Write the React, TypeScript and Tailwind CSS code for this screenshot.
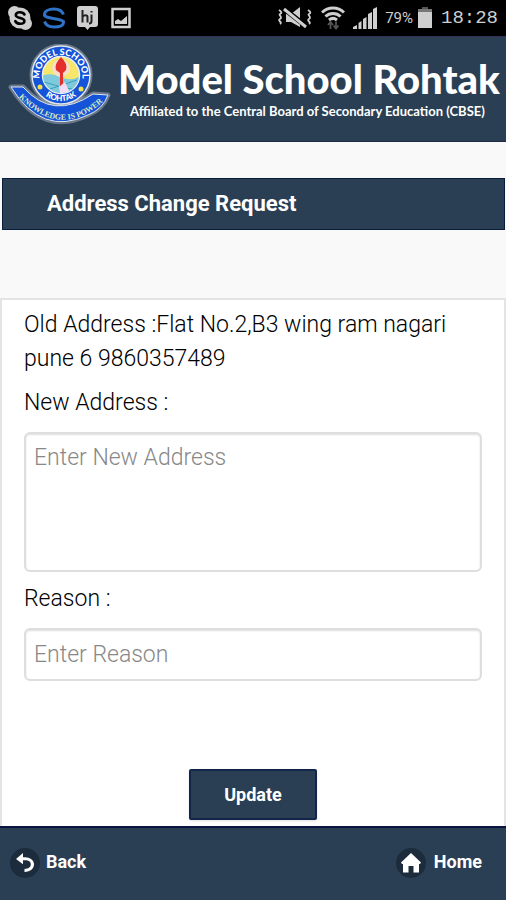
import { ChangeEvent, useState } from "react"

function StatusBar(){
    return(
        <div className="flex h-9 items-center justify-between bg-black pl-2 pr-2 text-[#cfcfcf]">
            <div className="flex items-center gap-2.5">
                <svg className="h-6 w-6" viewBox="0 0 24 24">
                    <circle cx="12" cy="12" r="10.500" fill="currentColor"/>
                    <circle cx="6.500" cy="6.500" r="6.500" fill="currentColor"/>
                    <circle cx="17.500" cy="17.500" r="6.500" fill="currentColor"/>
                    <path d="M16.500 8.500C15.600 7 14 6.300 12 6.300c-2.800 0-4.200 1.100-4.200 2.700 0 4 8.600 1.900 8.600 5.900 0 1.700-1.700 2.800-4.300 2.800-2.300 0-4-.8-4.800-2.600" fill="none" stroke="#000" strokeWidth="2.600" strokeLinecap="round"/>
                </svg>
                <svg className="h-6 w-6" viewBox="0 0 24 24" fill="none" stroke="#2f73c8" strokeWidth="3">
                    <path d="M21.500 8.500C20 4.500 16.500 3 12 3 6.500 3 2.500 5 2.500 8.500c0 2 1.500 2.500 5 3.200l9 1.800c3.500.7 5 1.500 5 3 0 3-4 4.500-9.500 4.500-4.500 0-8-1.500-9.500-5.500"/>
                    <path d="M1 9.500 23 15.500" strokeWidth="1.500"/>
                </svg>
                <svg className="h-6 w-6" viewBox="0 0 24 24">
                    <path d="M4 0h15a3 3 0 0 1 3 3v15a3 3 0 0 1-3 3h-5l-2.500 3L9 21H4a3 3 0 0 1-3-3V3a3 3 0 0 1 3-3z" fill="currentColor"/>
                    <path d="M6.500 4v12.500M6.500 11c1-2.500 5-2.500 5 0v5.500M15.500 8.500V15c0 2-1 2.500-2.500 2.500M15.500 5v1.500" fill="none" stroke="#222" strokeWidth="2"/>
                </svg>
                <svg className="h-6 w-6" viewBox="0 0 24 24">
                    <path d="M2.500 3h17v18h-17z" fill="none" stroke="currentColor" strokeWidth="2.500"/>
                    <path d="M5 18v-3l3-2 3 2 6-5v8z" fill="currentColor"/>
                </svg>
            </div>
            <div className="flex items-center gap-2">
                <svg className="h-6 w-9" viewBox="0 0 36 24">
                    <path d="M9 8h5l9-7v20l-9-5H9z" fill="currentColor"/>
                    <path d="M6 2l24 19" stroke="#000" strokeWidth="5"/>
                    <path d="M7 3l22 18" stroke="currentColor" strokeWidth="3"/>
                    <path d="M2 4c3 2 3 3 1 4s3 3 0 5 3 3 0 5M31 4c3 2 3 3 1 4s3 3 0 5 3 3 0 5" fill="none" stroke="currentColor" strokeWidth="1.800"/>
                </svg>
                <svg className="h-6 w-6" viewBox="0 0 24 24" fill="none" stroke="currentColor" strokeWidth="3">
                    <path d="M1 6.500C7 .5 17 .5 23 6.500M4.500 10.500c4-4 11-4 15 0M8 14c2.500-2 5.500-2 8 0"/>
                    <path d="M9.500 23v-7M7 19l2.500-3 2.500 3M15 15.500v7M12.500 19.500l2.500 3 2.500-3" stroke="#555" strokeWidth="1.800"/>
                </svg>
                <svg className="h-6 w-6" viewBox="0 0 24 24" fill="currentColor">
                    <path d="M0 23v-2l4-2v4zM5.500 17l3-2v8h-3zM10 13l3.500-2v12H10zM15 8l4-2v17h-4zM20 3l4-2v22h-4z"/>
                </svg>
                <div className="flex items-center gap-1">
                    <span className="font-['Roboto',sans-serif] text-[15px]">79%</span>
                    <svg className="h-6 w-4" viewBox="0 0 16 24">
                        <path d="M5 1h6v3H5z" fill="#555"/>
                        <path d="M1 3h14v4H1z" fill="#777"/>
                        <path d="M1 6h14v16H1z" fill="currentColor"/>
                    </svg>
                </div>
                <span className="font-['Liberation_Mono',monospace] text-[19px]">18:28</span>
            </div>
        </div>
    )
}

function SchoolLogo(){
    return(
        <svg className="h-[90px] w-[106px] shrink-0" viewBox="0 0 106 90">
            <defs>
                <path id="ringTop" d="M32.500 39a21.500 21.500 0 1 1 41 0"/>
                <path id="ringBottom" d="M27 31a26 26 0 0 0 52 0"/>
                <path id="ribbon" d="M9 51Q52 98 97 56"/>
                <clipPath id="emblem"><circle cx="53" cy="31" r="18"/></clipPath>
            </defs>
            <g fill="none" stroke="#a9b4c0" strokeOpacity="0.500" strokeWidth="5" strokeLinejoin="round">
                <circle cx="53" cy="31" r="29"/>
                <path d="M3 43h12q30 34 70 7l15 1q-5 14-20 20-46 22-77-28z"/>
            </g>
            <circle cx="53" cy="31" r="29" fill="#1553d8" stroke="#dfe6ee" strokeWidth="1.500"/>
            <circle cx="53" cy="31" r="18.500" fill="#f7e66a" stroke="#e8f0f8" strokeWidth="1.500"/>
            <g clipPath="url(#emblem)">
                <path d="M34 32q9-4 19 1t19-1v20H34z" fill="#7fc9dd"/>
                <path d="M36 38l14 4M57 40l12-4M42 45l9-3M56 44l9 1" stroke="#3a9fbd"/>
                <circle cx="53" cy="24" r="9" fill="#f8dfca"/>
                <path d="M53 13q7 7 5 13l-3 3v13h-3V29l-4-3q-2-6 5-13z" fill="#e3302c"/>
                <path d="M51 43l6-5 5 11h-10z" fill="#f1dcf4"/>
            </g>
            <circle cx="32" cy="43" r="2.500" fill="#f5e04c"/>
            <circle cx="73" cy="45" r="2.500" fill="#f5e04c"/>
            <path d="M3 43h12q30 34 70 7l15 1q-5 14-20 20-46 22-77-28z" fill="#1553d8" stroke="#dfe6ee" strokeWidth="1"/>
            <text className="font-['Lato',sans-serif] text-[9px] font-black" fill="#fff"><textPath href="#ringTop" startOffset="50%" textAnchor="middle">MODEL SCHOOL</textPath></text>
            <text className="font-['Lato',sans-serif] text-[8px] font-black" fill="#fff"><textPath href="#ringBottom" startOffset="50%" textAnchor="middle">ROHTAK</textPath></text>
            <text className="font-['Liberation_Serif',serif] text-[8px] font-bold" fill="#d9ecb8"><textPath href="#ribbon" startOffset="50%" textAnchor="middle">KNOWLEDGE IS POWER</textPath></text>
        </svg>
    )
}

export default function App(){
    const [formData,setFormData]=useState({
        address:'',
        reason:''
    })

    const onFieldChange = (e:ChangeEvent)=>{
        const target = e.target as HTMLInputElement;
        setFormData({
            ...formData,
            [target.name]:target.value
        })
    }

    return(
        <div className="flex min-h-screen flex-col bg-[#f9f9f9] font-['Roboto',sans-serif] text-black">
            <StatusBar/>
            <header className="flex h-[106px] items-center gap-1 border-b border-t border-b-[#1d2b45] border-t-[#33305a] bg-[#2a3f54] pl-2 text-white">
                <SchoolLogo/>
                <div className="whitespace-nowrap font-['Lato',sans-serif]">
                    <h1 className="text-[40px] font-black leading-12">Model School Rohtak</h1>
                    <p className="pb-1 pl-3 text-[13px] font-bold leading-4">Affiliated to the Central Board of Secondary Education (CBSE)</p>
                </div>
            </header>
            <h2 className="ml-0.5 mr-px mt-9 border border-[#0b1d3c] bg-[#2a3f54] pl-11 text-[22px] font-bold leading-[50px] text-white">Address Change Request</h2>
            <form className="mt-17 flex flex-1 flex-col border-x-2 border-t-2 border-[#e4e4e4] bg-white px-[22px] pt-2 text-[23px] font-light" onSubmit={(e)=>e.preventDefault()}>
                <p className="leading-[34px]">Old Address :Flat No.2,B3 wing ram nagari pune 6 9860357489</p>
                <label htmlFor="address" className="mt-2.5 leading-[34px]">New Address :</label>
                <textarea id="address" name="address" placeholder="Enter New Address" value={formData.address} onChange={onFieldChange} className="mt-3 h-[140px] w-full resize-none rounded-md border-2 border-[#dedede] px-2 py-2 leading-8 shadow-[inset_0_1px_2px_#ddd] placeholder:text-[#888]"/>
                <label htmlFor="reason" className="mt-2.5 leading-[34px]">Reason :</label>
                <input id="reason" type="text" name="reason" placeholder="Enter Reason" value={formData.reason} onChange={onFieldChange} className="mt-3 h-[53px] w-full rounded-md border-2 border-[#dedede] px-2 shadow-[inset_0_1px_2px_#ddd] placeholder:text-[#888]"/>
                <button type="submit" className="mb-1.5 mt-auto h-[51px] w-32 self-center rounded-xs border-2 border-[#12254a] bg-[#2a3f54] text-lg font-bold text-white shadow">Update</button>
            </form>
            <footer className="flex h-[74px] items-center justify-between border-t-2 border-[#0b1440] bg-[#2a3f54] px-2 pb-1 text-lg font-bold text-white">
                <a href="#back" className="flex items-center gap-1.5">
                    <svg className="h-8 w-8" viewBox="0 0 32 32">
                        <circle cx="17" cy="17" r="15" fill="#1c2c3c"/>
                        <path d="M8 13l7-6v4.200h2c5 0 9 3 9 7.100s-3.500 7.700-9.500 7.700v-3c4 0 6.300-2 6.300-4.700 0-2.600-2.300-4-5.800-4h-2v4z" fill="#fff"/>
                    </svg>
                    Back
                </a>
                <a href="#home" className="flex items-center gap-1.5 pr-4">
                    <svg className="h-8 w-8" viewBox="0 0 32 32">
                        <circle cx="15" cy="17" r="15" fill="#1c2c3c"/>
                        <path d="M15 7l10 9.500-1 1.500h-1v8.500h-5.500V20h-5v6.500H7V18H6l-1-1.500z" fill="#fff"/>
                    </svg>
                    Home
                </a>
            </footer>
        </div>
    )
}
